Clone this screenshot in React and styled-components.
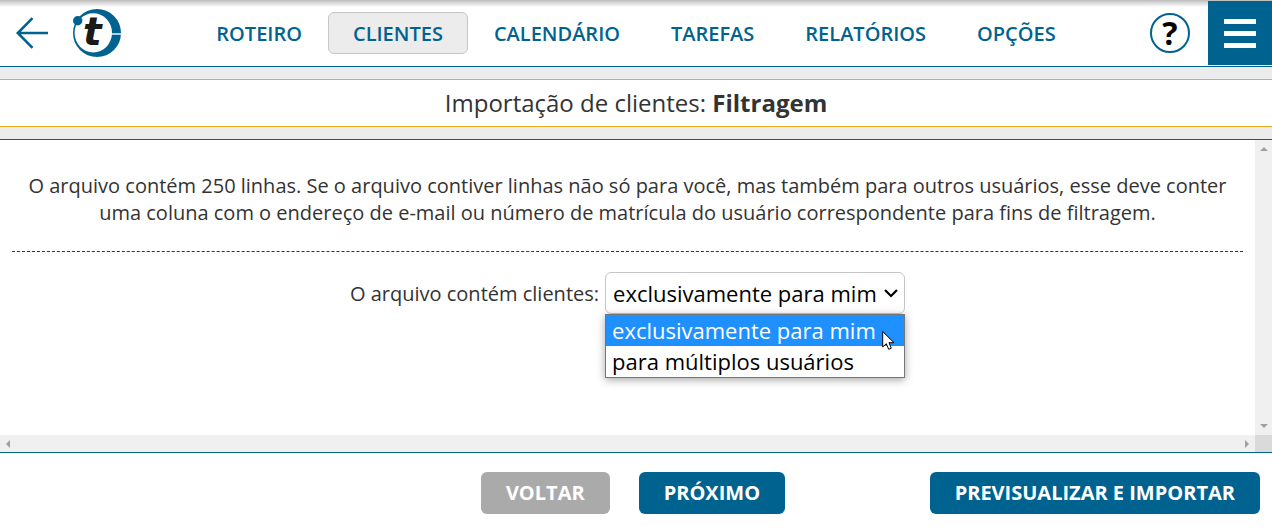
import React from "react";
import styled, { createGlobalStyle, css } from "styled-components";

const blue = "#00638f";
const gold = "#e8ab1c";
const grey = "#ececec";

const GlobalStyle = createGlobalStyle`
  *, *::before, *::after { box-sizing: border-box; }
  body {
    margin: 0;
    background: #fff;
    color: #333;
    font-family: "Open Sans", "Noto Sans", sans-serif;
    font-size: 20px;
  }
  button, select { font-family: inherit; }
`;

const Page = styled.div`
  min-height: 100vh;
  display: flex;
  flex-direction: column;
`;

const Header = styled.header`
  position: relative;
  height: 67px;
  display: grid;
  grid-template-columns: 1fr auto 1fr;
  align-items: center;
  border-bottom: 1px solid ${blue};
  &::before {
    content: "";
    position: absolute;
    inset: 0 0 auto;
    height: 7px;
    background: linear-gradient(#bcbcbc, #d8d8d8 40%, rgba(255, 255, 255, 0));
  }
`;

const HeaderStart = styled.div`
  display: flex;
  align-items: center;
  gap: 24px;
  padding-left: 16px;
`;

const HeaderEnd = styled.div`
  display: flex;
  align-items: center;
  justify-content: flex-end;
  gap: 18px;
`;

const IconButton = styled.button`
  display: flex;
  padding: 0;
  border: 0;
  background: none;
  cursor: pointer;
`;

const HelpButton = styled.button`
  width: 40px;
  height: 40px;
  padding: 0;
  border: 2px solid ${blue};
  border-radius: 50%;
  background: #fff;
  color: #000;
  font-size: 32px;
  line-height: 34px;
  font-weight: 700;
`;

const MenuButton = styled.button`
  position: relative;
  width: 64px;
  height: 64px;
  padding: 1px 16px 0;
  border: 0;
  background: ${blue};
  display: flex;
  flex-direction: column;
  justify-content: center;
  gap: 7px;
`;

const MenuBar = styled.span`
  height: 5px;
  background: #fff;
`;

const Nav = styled.nav`
  display: flex;
  gap: 1px;
`;

const NavLink = styled.a`
  height: 42px;
  padding: 0 24px;
  border: 1px solid transparent;
  border-radius: 6px;
  color: ${blue};
  font-size: 20px;
  line-height: 42px;
  font-weight: 600;
  text-decoration: none;
  ${({ $active }) =>
    $active &&
    css`
      background: ${grey};
      border-color: #c3c7c9;
    `}
`;

const TitleBand = styled.div`
  padding: 12px 0;
  background: ${grey};
  border-bottom: 1px solid ${blue};
`;

const Title = styled.h1`
  margin: 0;
  border: solid ${gold};
  border-width: 1px 0;
  background: #fff;
  text-align: center;
  font-size: 24px;
  line-height: 46px;
  font-weight: 400;
`;

const ScrollPane = styled.main`
  flex: 1;
  display: grid;
  grid-template-columns: 1fr 17px;
  grid-template-rows: 1fr 17px;
  border-bottom: 1px solid ${blue};
`;

const Content = styled.div`
  padding: 32px 12px;
  text-align: center;
`;

const Intro = styled.p`
  margin: 0;
  padding: 0 12px 25px;
  border-bottom: 1px dashed #333;
  line-height: 27px;
`;

const Field = styled.div`
  display: flex;
  justify-content: center;
  align-items: center;
  gap: 6px;
  margin-top: 20px;
`;

const SelectWrap = styled.div`
  position: relative;
  width: 300px;
  color: #000;
  font-size: 22px;
`;

const Select = styled.select`
  display: block;
  width: 100%;
  height: 42px;
  padding: 0 7px;
  appearance: none;
  border: 1px solid #c3c7c9;
  border-radius: 6px;
  background: #fff;
  color: #000;
  font-size: 22px;
`;

const Chevron = styled.svg`
  position: absolute;
  top: 16px;
  right: 6px;
  pointer-events: none;
`;

const OptionList = styled.ul`
  position: absolute;
  top: 100%;
  left: 0;
  right: 0;
  margin: 0;
  padding: 0;
  list-style: none;
  border: 1px solid #767676;
  background: #fff;
  box-shadow: 0 2px 8px rgba(0, 0, 0, 0.35);
  text-align: left;
`;

const Option = styled.li`
  padding: 0 6px;
  line-height: 31px;
  background: ${({ $selected }) => ($selected ? "#1e90ff" : "#fff")};
  color: ${({ $selected }) => ($selected ? "#fff" : "#000")};
`;

const Pointer = styled.svg`
  position: absolute;
  top: 58px;
  right: 10px;
`;

const ScrollTrack = styled.div`
  display: flex;
  flex-direction: ${({ $vertical }) => ($vertical ? "column" : "row")};
  justify-content: space-between;
  align-items: center;
  padding: ${({ $vertical }) => ($vertical ? "7px 0" : "0 6px")};
  background: #f0f0f0;
`;

const ScrollCorner = styled.div`
  background: #dadada;
`;

const Footer = styled.footer`
  display: grid;
  grid-template-columns: 1fr auto 1fr;
  padding: 19px 12px 17px;
`;

const FooterGroup = styled.div`
  grid-column: ${({ $column }) => $column};
  display: flex;
  justify-content: flex-end;
  gap: 29px;
`;

const StepButtons = styled(FooterGroup)`
  padding-right: 6px;
`;

const Button = styled.button`
  height: 42px;
  padding: 0 25px;
  border: 0;
  border-radius: 6px;
  background: ${({ $muted }) => ($muted ? "#aaa" : blue)};
  color: #fff;
  font-size: 20px;
  line-height: 42px;
  font-weight: 700;
  white-space: nowrap;
`;

const arrows = {
  up: { w: 8, h: 4, d: "M0 4 4 0 8 4Z" },
  down: { w: 8, h: 4, d: "M0 0H8L4 4Z" },
  left: { w: 4, h: 8, d: "M4 0V8L0 4Z" },
  right: { w: 4, h: 8, d: "M0 0 4 4 0 8Z" },
};

function ScrollArrow({ dir }) {
  const { w, h, d } = arrows[dir];
  return (
    <svg width={w} height={h} aria-hidden="true">
      <path d={d} fill="#a0a0a0" />
    </svg>
  );
}

function BackIcon() {
  return (
    <svg width="33" height="32" viewBox="0 0 33 32" fill="none" stroke={blue} strokeWidth="2.6">
      <path d="M16.5 1.2 1.8 16 16.5 30.8M2 16H32" />
    </svg>
  );
}

function Logo() {
  return (
    <svg width="48" height="48" viewBox="0 0 48 48" role="img" aria-label="Logo">
      <circle cx="24" cy="24" r="24" fill={blue} />
      <ellipse cx="20.3" cy="23.8" rx="18.7" ry="19.6" fill="#fff" />
      <path d="M38 25H48" stroke="#fff" strokeWidth="1.4" />
      <circle cx="4.7" cy="11.7" r="4.7" fill={blue} />
      <text x="10" y="36" fontFamily="DejaVu Sans" fontSize="39" fontWeight="700" fontStyle="italic" fill="#1a1a18">
        t
      </text>
    </svg>
  );
}

const navItems = ["ROTEIRO", "CLIENTES", "CALENDÁRIO", "TAREFAS", "RELATÓRIOS", "OPÇÕES"];
const options = ["exclusivamente para mim", "para múltiplos usuários"];

export default function App() {
  return (
    <Page>
      <GlobalStyle />
      <Header>
        <HeaderStart>
          <IconButton type="button" aria-label="Voltar">
            <BackIcon />
          </IconButton>
          <Logo />
        </HeaderStart>
        <Nav>
          {navItems.map((item) => (
            <NavLink key={item} href="#" $active={item === "CLIENTES"}>
              {item}
            </NavLink>
          ))}
        </Nav>
        <HeaderEnd>
          <HelpButton type="button">?</HelpButton>
          <MenuButton type="button" aria-label="Menu">
            <MenuBar />
            <MenuBar />
            <MenuBar />
          </MenuButton>
        </HeaderEnd>
      </Header>
      <TitleBand>
        <Title>
          Importação de clientes: <b>Filtragem</b>
        </Title>
      </TitleBand>
      <ScrollPane>
        <Content>
          <Intro>
            O arquivo contém 250 linhas. Se o arquivo contiver linhas não só para você, mas também
            para outros usuários, esse deve conter uma coluna com o endereço de e-mail ou número de
            matrícula do usuário correspondente para fins de filtragem.
          </Intro>
          <Field>
            <label htmlFor="filter">O arquivo contém clientes:</label>
            <SelectWrap>
              <Select id="filter" defaultValue={options[0]}>
                {options.map((option) => (
                  <option key={option}>{option}</option>
                ))}
              </Select>
              <Chevron width="16" height="11" viewBox="0 0 16 11" fill="none" stroke="#000" strokeWidth="2.2">
                <path d="M2 2 8 8 14 2" />
              </Chevron>
              <OptionList role="listbox">
                {options.map((option, i) => (
                  <Option key={option} role="option" aria-selected={i === 0} $selected={i === 0}>
                    {option}
                  </Option>
                ))}
              </OptionList>
              <Pointer width="13" height="21" viewBox="0 0 13 21">
                <path
                  d="M.7 1.5V17L4.3 13.7 6.7 19.3 9.3 18.2 7 12.7H12Z"
                  fill="#fff"
                  stroke="#000"
                />
              </Pointer>
            </SelectWrap>
          </Field>
        </Content>
        <ScrollTrack $vertical>
          <ScrollArrow dir="up" />
          <ScrollArrow dir="down" />
        </ScrollTrack>
        <ScrollTrack>
          <ScrollArrow dir="left" />
          <ScrollArrow dir="right" />
        </ScrollTrack>
        <ScrollCorner />
      </ScrollPane>
      <Footer>
        <StepButtons $column={2}>
          <Button type="button" $muted>
            VOLTAR
          </Button>
          <Button type="button">PRÓXIMO</Button>
        </StepButtons>
        <FooterGroup $column={3}>
          <Button type="button">PREVISUALIZAR E IMPORTAR</Button>
        </FooterGroup>
      </Footer>
    </Page>
  );
}
